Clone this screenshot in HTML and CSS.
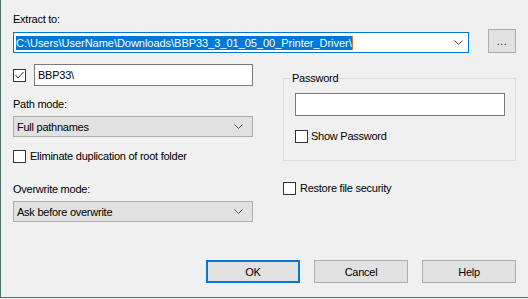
FILE: index.html
```html
<!DOCTYPE html>
<html lang="en">
<head>
    <meta charset="UTF-8">
    <meta name="viewport" content="width=device-width, initial-scale=1.0">
    <title>Extraction path and options</title>
    <link rel="stylesheet" href="styles.css">
</head>
<body>
    <div class="dialog">
        <div class="label">Extract to:</div>
        <div class="dest-row">
            <div class="combo">
                <span class="sel">C:\Users\UserName\Downloads\BBP33_3_01_05_00_Printer_Driver\</span><span class="caret"></span>
                <svg class="chevron" width="9" height="5" viewBox="0 0 9 5"><polyline points="0.5,0.5 4.5,4.5 8.5,0.5" fill="none" stroke="#444" stroke-width="1"/></svg>
            </div>
            <button class="btn browse">...</button>
        </div>

        <div class="columns">
            <div class="col-left">
                <div class="sub-row">
                    <span class="check">
                        <svg width="11" height="11" viewBox="0 0 11 11"><polyline points="1.5,5 4,8 9.5,2" fill="none" stroke="#333" stroke-width="1"/></svg>
                    </span>
                    <div class="textbox sub">BBP33\</div>
                </div>
                <div class="label path-label">Path mode:</div>
                <div class="select">
                    <span>Full pathnames</span>
                    <svg class="chevron" width="9" height="5" viewBox="0 0 9 5"><polyline points="0.5,0.5 4.5,4.5 8.5,0.5" fill="none" stroke="#555" stroke-width="1"/></svg>
                </div>
                <div class="check-row elim">
                    <span class="check"></span>
                    <span>Eliminate duplication of root folder</span>
                </div>
                <div class="label over-label">Overwrite mode:</div>
                <div class="select">
                    <span>Ask before overwrite</span>
                    <svg class="chevron" width="9" height="5" viewBox="0 0 9 5"><polyline points="0.5,0.5 4.5,4.5 8.5,0.5" fill="none" stroke="#555" stroke-width="1"/></svg>
                </div>
            </div>

            <div class="col-right">
                <fieldset class="group">
                    <legend>Password</legend>
                    <div class="textbox pw"></div>
                    <div class="check-row show-pw">
                        <span class="check"></span>
                        <span>Show Password</span>
                    </div>
                </fieldset>
                <div class="check-row restore">
                    <span class="check"></span>
                    <span>Restore file security</span>
                </div>
            </div>
        </div>

        <div class="footer">
            <button class="btn action default">OK</button>
            <button class="btn action">Cancel</button>
            <button class="btn action">Help</button>
        </div>
    </div>
</body>
</html>
```

FILE: styles.css
```css
html, body {
    margin: 0;
    background-color: #f0f0f0;
}
body {
    font-family: "Liberation Sans", Arial, sans-serif;
    font-size: 11px;
    letter-spacing: -0.25px;
    color: #000;
}
.dialog {
    box-sizing: border-box;
    width: 528px;
    height: 298px;
    border-left: 1px solid #50706c;
    border-bottom: 1px solid #50706c;
    padding: 13px 12px 14px 12px;
    display: flex;
    flex-direction: column;
}
.label {
    line-height: 13px;
    height: 13px;
}
.dest-row {
    display: flex;
    align-items: flex-end;
    gap: 19px;
    margin-top: 3px;
}
.combo {
    box-sizing: border-box;
    width: 456px;
    height: 21px;
    border: 1px solid #0078d7;
    background: #fff;
    display: flex;
    align-items: center;
    padding-left: 2px;
    padding-right: 5px;
}
.combo .sel {
    background: #0078d7;
    color: #fff;
    line-height: 14px;
    white-space: nowrap;
    letter-spacing: -0.03px;
}
.combo .caret {
    width: 1px;
    height: 14px;
    background: #c47a30;
}
.chevron {
    margin-left: auto;
    display: block;
}
.btn {
    box-sizing: border-box;
    font-family: inherit;
    font-size: 11px;
    letter-spacing: inherit;
    color: #000;
    background: #e1e1e1;
    border: 1px solid #adadad;
    border-radius: 0;
    padding: 0;
    margin: 0;
}
.browse {
    width: 28px;
    height: 24px;
    color: #4a004a;
    letter-spacing: 0.5px;
}
.columns {
    display: flex;
    gap: 30px;
}
.col-left {
    width: 240px;
    display: flex;
    flex-direction: column;
}
.col-right {
    width: 233px;
    display: flex;
    flex-direction: column;
}
.sub-row {
    display: flex;
    align-items: center;
    gap: 8px;
    margin-top: 11px;
}
.check {
    box-sizing: border-box;
    width: 13px;
    height: 13px;
    border: 1px solid #333;
    background: #fff;
    display: flex;
    align-items: center;
    justify-content: center;
    flex: none;
}
.textbox {
    box-sizing: border-box;
    background: #fff;
    border: 1px solid #7a7a7a;
    line-height: 14px;
    padding-left: 3px;
    display: flex;
    align-items: center;
}
.textbox.sub {
    width: 219px;
    height: 22px;
}
.path-label {
    margin-top: 12px;
}
.over-label {
    margin-top: 20px;
}
.select {
    box-sizing: border-box;
    height: 21px;
    margin-top: 5px;
    background: #e1e1e1;
    border: 1px solid #adadad;
    display: flex;
    align-items: center;
    padding: 0 9px 0 3px;
}
.check-row {
    display: flex;
    align-items: center;
    gap: 4px;
    line-height: 13px;
}
.elim {
    margin-top: 13px;
}
.group {
    box-sizing: border-box;
    width: 233px;
    margin: 19px 0 0 0;
    padding: 0 10px 17px 11px;
    border: 1px solid #dcdcdc;
    min-width: 0;
}
.group legend {
    line-height: 13px;
    padding: 0 1px;
    margin-left: -4px;
}
.textbox.pw {
    width: 210px;
    height: 23px;
    margin-top: 8px;
}
.show-pw {
    margin-top: 14px;
    gap: 3px;
}
.restore {
    margin-top: 21px;
}
.footer {
    margin-top: auto;
    display: flex;
    justify-content: flex-end;
    gap: 14px;
}
.action {
    width: 94px;
    height: 23px;
}
.action.default {
    border: 2px solid #0078d7;
}
```
